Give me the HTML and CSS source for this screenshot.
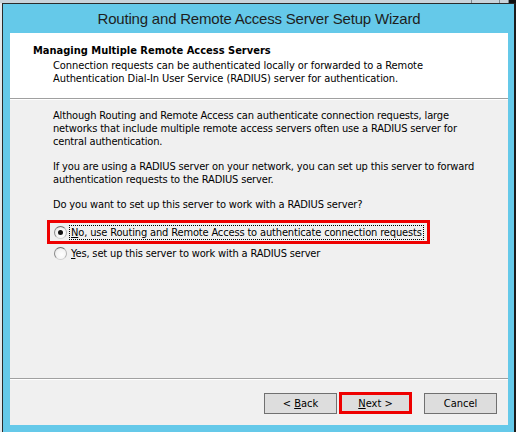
FILE: index.html
```html
<!DOCTYPE html>
<html>
<head>
<meta charset="utf-8">
<title>Routing and Remote Access Server Setup Wizard</title>
<link rel="stylesheet" href="styles.css">
</head>
<body>
<div class="screen">
  <div class="strip">
    <span class="seg seg-a"></span>
    <span class="seg seg-b"></span>
    <span class="seg seg-c"></span>
    <span class="seg-dark"></span>
  </div>
  <div class="desk">
    <div class="window">
      <div class="titlebar"><span>Routing and Remote Access Server Setup Wizard</span></div>
      <div class="client">
        <div class="header">
          <div class="h-title">Managing Multiple Remote Access Servers</div>
          <div class="h-sub">Connection requests can be authenticated locally or forwarded to a Remote<br>Authentication Dial-In User Service (RADIUS) server for authentication.</div>
        </div>
        <div class="sep"></div>
        <div class="body">
          <p>Although Routing and Remote Access can authenticate connection requests, large<br>networks that include multiple remote access servers often use a RADIUS server for<br>central authentication.</p>
          <p>If you are using a RADIUS server on your network, you can set up this server to forward<br>authentication requests to the RADIUS server.</p>
          <p class="question">Do you want to set up this server to work with a RADIUS server?</p>
          <div class="option highlight">
            <span class="radio checked"></span>
            <span class="label focus"><u>N</u>o, use Routing and Remote Access to authenticate connection requests</span>
          </div>
          <div class="option plain">
            <span class="radio"></span>
            <span class="label"><u>Y</u>es, set up this server to work with a RADIUS server</span>
          </div>
        </div>
        <div class="sep"></div>
        <div class="footer">
          <div class="btn btn-back"><span>&lt; <u>B</u>ack</span></div>
          <div class="btn btn-next"><span><u>N</u>ext &gt;</span></div>
          <div class="btn"><span>Cancel</span></div>
        </div>
      </div>
    </div>
  </div>
</div>
</body>
</html>
```
FILE: styles.css
```css
* { box-sizing: border-box; }

html, body {
  margin: 0;
  padding: 0;
}

body {
  width: 516px;
  height: 432px;
  overflow: hidden;
  background: #e4e8eb;
  font-family: "DejaVu Sans Condensed", "Liberation Sans", Arial, sans-serif;
  font-size: 11px;
  line-height: 13px;
  color: #000;
}

.screen {
  width: 516px;
  height: 432px;
  display: flex;
  flex-direction: column;
}

.strip {
  height: 3px;
  display: flex;
  background: #c9d3da;
  flex-shrink: 0;
}

.seg { height: 3px; border-right: 1px solid #7d878e; }
.seg-a { width: 472px; }
.seg-b { width: 28px; }
.seg-c { width: 9px; }
.seg-dark { flex: 1; background: #111; }

.desk {
  flex: 1;
  padding-left: 2px;
  background: #e4e8eb;
}

.window {
  width: 514px;
  height: 429px;
  background: #65c9e9;
  border-top: 1px solid #2a2a2a;
  border-left: 1px solid #2a2a2a;
  border-right: 2px solid #1c1c1c;
  padding: 0 6px 7px 7px;
  display: flex;
  flex-direction: column;
}

.titlebar {
  height: 29px;
  display: flex;
  align-items: center;
  justify-content: center;
  font-family: "Liberation Sans", Arial, sans-serif;
  font-size: 15px;
  line-height: 18px;
  letter-spacing: -0.2px;
  color: #1e1e1e;
  padding-top: 1px;
}

.client {
  flex: 1;
  display: flex;
  flex-direction: column;
  background: #f0f0f0;
}

.header {
  height: 65px;
  background: #fff;
  padding: 11px 0 0 23px;
}

.h-title {
  font-weight: bold;
}

.h-sub {
  margin-top: 2px;
  padding-left: 20px;
  letter-spacing: -0.08px;
}

.sep {
  height: 2px;
  border-top: 1px solid #a0a0a0;
  border-bottom: 1px solid #fff;
}

.body {
  flex: 1;
  padding: 9px 0 0 43px;
  letter-spacing: -0.15px;
}

.body p {
  margin: 0 0 12px 0;
}

.body p.question {
  margin-bottom: 9px;
}

.option {
  display: flex;
  align-items: center;
  height: 18px;
  width: fit-content;
}

.highlight {
  height: 24px;
  border: 3px solid #ee0000;
  margin-left: -6px;
  padding: 0 3px 0 4px;
}

.plain {
  margin-left: -3px;
  padding-left: 4px;
}

.radio {
  width: 13px;
  height: 13px;
  border-radius: 50%;
  border: 1px solid;
  border-color: #6e6e6e #b4b4b4 #d0d0d0 #8a8a8a;
  background: radial-gradient(circle at 60% 60%, #ffffff 0%, #f4f4f4 55%, #d8d8d8 100%);
  margin-right: 2px;
  display: flex;
  align-items: center;
  justify-content: center;
  flex-shrink: 0;
}

.radio.checked::after {
  content: "";
  width: 5px;
  height: 5px;
  border-radius: 50%;
  background: #111;
}

.label {
  border: 1px solid transparent;
  padding: 0 1px;
  white-space: nowrap;
}

.label.focus {
  border: 1px dotted #000;
}

.footer {
  height: 45px;
  display: flex;
  justify-content: flex-end;
  align-items: flex-end;
  padding: 12px 11px 11px 0;
}

.btn {
  width: 73px;
  height: 21px;
  border: 1px solid #707070;
  background: #dddddd;
  display: flex;
  align-items: center;
  justify-content: center;
  color: #000;
  white-space: pre;
}

.btn-back { margin-right: 2px; }

.btn-next {
  height: 22px;
  border: 3px solid #ee0000;
  margin-right: 12px;
  padding-top: 1px;
}
```
